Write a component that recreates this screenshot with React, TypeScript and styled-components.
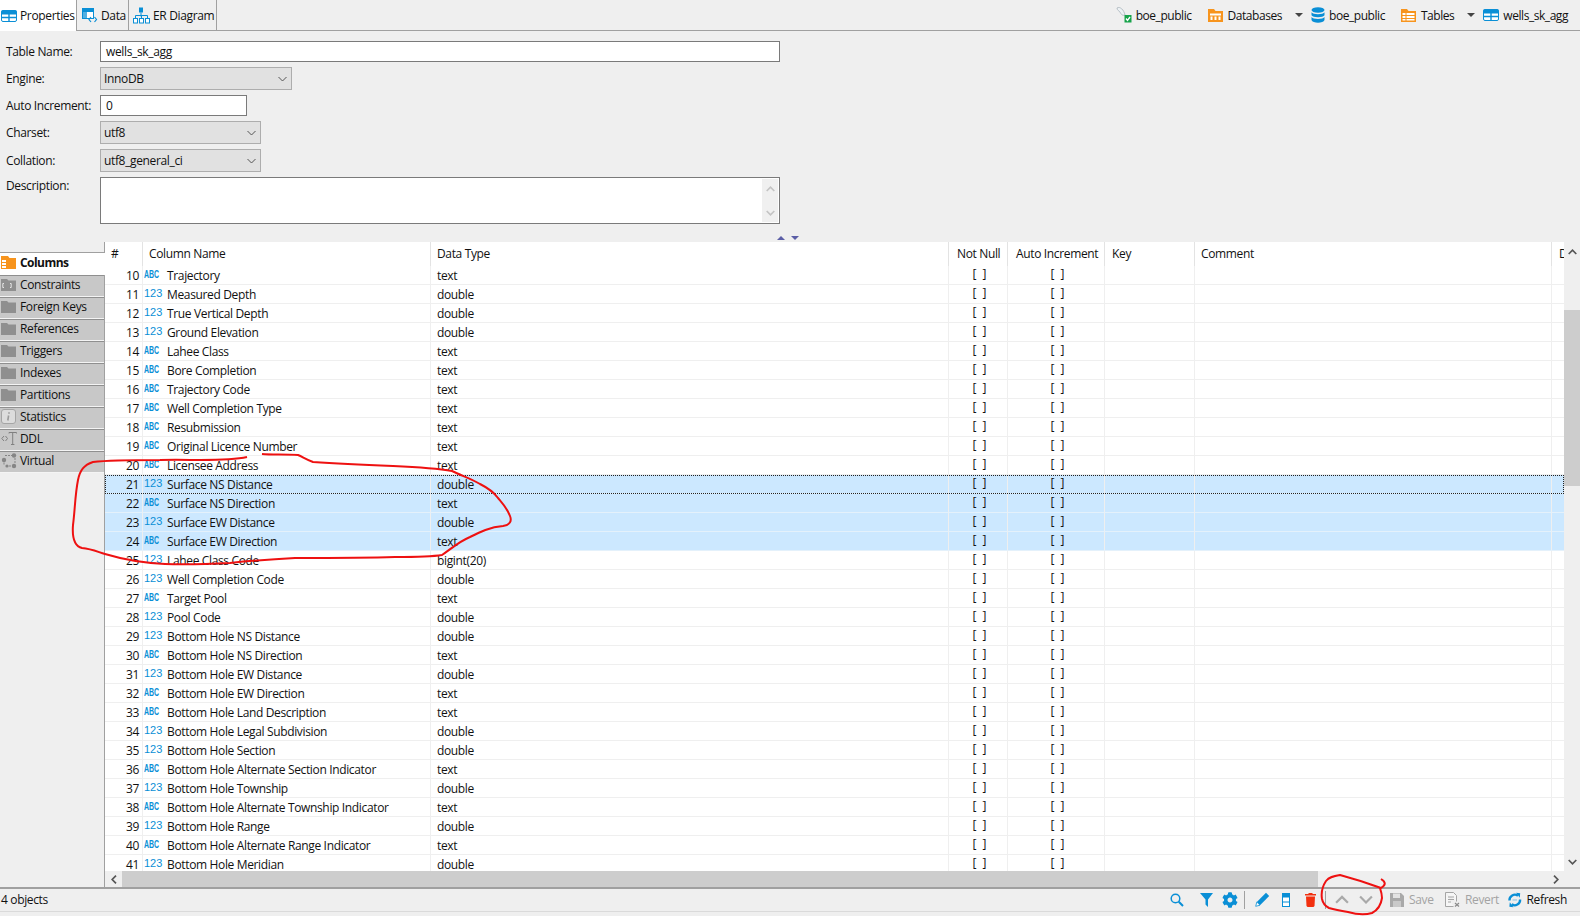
import React from 'react';
import styled, { createGlobalStyle } from 'styled-components';
import { FaCog } from 'react-icons/fa';

const Blue = '#0a8fd6';
const Orange = '#f7941d';
const Grey = '#8f8f8f';
const PanelBg = '#efefef';
const Line = '#a0a0a0';
const RowLine = '#efefef';

const GlobalStyle = createGlobalStyle`
  html, body {
    margin: 0;
    padding: 0;
    background: #fff;
    overflow: hidden;
  }
  * { box-sizing: border-box; }
`;

type Col = [number, 'abc' | '123', string, string];

const rows: Col[] = [
  [10, 'abc', 'Trajectory', 'text'],
  [11, '123', 'Measured Depth', 'double'],
  [12, '123', 'True Vertical Depth', 'double'],
  [13, '123', 'Ground Elevation', 'double'],
  [14, 'abc', 'Lahee Class', 'text'],
  [15, 'abc', 'Bore Completion', 'text'],
  [16, 'abc', 'Trajectory Code', 'text'],
  [17, 'abc', 'Well Completion Type', 'text'],
  [18, 'abc', 'Resubmission', 'text'],
  [19, 'abc', 'Original Licence Number', 'text'],
  [20, 'abc', 'Licensee Address', 'text'],
  [21, '123', 'Surface NS Distance', 'double'],
  [22, 'abc', 'Surface NS Direction', 'text'],
  [23, '123', 'Surface EW Distance', 'double'],
  [24, 'abc', 'Surface EW Direction', 'text'],
  [25, '123', 'Lahee Class Code', 'bigint(20)'],
  [26, '123', 'Well Completion Code', 'double'],
  [27, 'abc', 'Target Pool', 'text'],
  [28, '123', 'Pool Code', 'double'],
  [29, '123', 'Bottom Hole NS Distance', 'double'],
  [30, 'abc', 'Bottom Hole NS Direction', 'text'],
  [31, '123', 'Bottom Hole EW Distance', 'double'],
  [32, 'abc', 'Bottom Hole EW Direction', 'text'],
  [33, 'abc', 'Bottom Hole Land Description', 'text'],
  [34, '123', 'Bottom Hole Legal Subdivision', 'double'],
  [35, '123', 'Bottom Hole Section', 'double'],
  [36, 'abc', 'Bottom Hole Alternate Section Indicator', 'text'],
  [37, '123', 'Bottom Hole Township', 'double'],
  [38, 'abc', 'Bottom Hole Alternate Township Indicator', 'text'],
  [39, '123', 'Bottom Hole Range', 'double'],
  [40, 'abc', 'Bottom Hole Alternate Range Indicator', 'text'],
  [41, '123', 'Bottom Hole Meridian', 'double'],
];

// icons
const TableIcon = () => (
  <svg width="16" height="14" viewBox="0 0 16 14">
    <rect x="0.5" y="1.5" width="15" height="11" rx="1.5" fill="#fff" stroke={Blue} />
    <rect x="0.5" y="1.5" width="15" height="4" fill={Blue} />
    <path d="M8 2v10M1 8.5h14" stroke={Blue} strokeWidth="1.4" />
  </svg>
);

const DataIcon = () => (
  <svg width="16" height="16" viewBox="0 0 16 16">
    <rect x="0.5" y="1.5" width="11" height="10" fill="#fff" stroke={Blue} />
    <rect x="1" y="2" width="10" height="3" fill={Blue} />
    <rect x="1" y="5" width="4" height="6" fill={Blue} opacity="0.7" />
    <path d="M9 10l-2 2.5 2 2.5M12.5 10l2 2.5-2 2.5" fill="none" stroke={Blue} strokeWidth="1.2" />
  </svg>
);

const ErIcon = () => (
  <svg width="17" height="17" viewBox="0 0 17 17">
    <rect x="6" y="0.5" width="4" height="5" fill={Blue} />
    <path d="M8 5.5v4M2.5 11V8.5h12V11M8.5 9v2" fill="none" stroke={Blue} />
    <rect x="0.5" y="11.5" width="4" height="4.5" fill="#fff" stroke={Blue} />
    <rect x="6.5" y="11.5" width="4" height="4.5" fill="#fff" stroke={Blue} />
    <rect x="12.5" y="11.5" width="4" height="4.5" fill="#fff" stroke={Blue} />
  </svg>
);

const ConnIcon = () => (
  <svg width="16" height="18" viewBox="0 0 16 18">
    <path d="M1 2c3-2 7 2 8 7-3 1-4-1-5-3-1-1-3-2-3-4z" fill="#eef2f4" stroke="#a8b4bb" strokeWidth="0.8" />
    <rect x="8.5" y="9" width="7" height="7.5" fill="#17a34a" />
    <path d="M10 12.5l1.5 2 2.5-3.5" fill="none" stroke="#fff" strokeWidth="1.3" />
  </svg>
);

const OrangeFolder = ({ kind }: { kind: 'db' | 'rows' }) => (
  <svg width="15" height="14" viewBox="0 0 15 14">
    <path d="M0 1h6l1.5 2H15v11H0z" fill={Orange} />
    {kind === 'db' ? (
      <path d="M2 5.5h11v2H2zM2.5 8.5h2v3.5h-2zM6.5 8.5h2v3.5h-2zM10.5 8.5h2v3.5h-2z" fill="#fff" />
    ) : (
      <path d="M1.5 5h3v2h-3zM5.5 5h8v2h-8zM1.5 8h3v2h-3zM5.5 8h8v2h-8zM1.5 11h3v1.5h-3zM5.5 11h8v1.5h-8z" fill="#fff" />
    )}
  </svg>
);

const ColumnsIcon = () => (
  <svg width="15" height="13" viewBox="0 0 15 13">
    <path d="M0 0h7l1.5 2H15v11H0z" fill={Orange} />
    <path d="M1 4h4v2H1zM1 7h4v2H1zM1 10h4v2H1z" fill="#fff" />
  </svg>
);

const DbIcon = () => (
  <svg width="14" height="16" viewBox="0 0 14 16">
    <ellipse cx="7" cy="3" rx="6.5" ry="2.8" fill={Blue} />
    <path d="M0.5 5.2c1 2.6 12 2.6 13 0v3c-1 2.6-12 2.6-13 0zM0.5 10c1 2.6 12 2.6 13 0v3c-1 3.6-12 3.6-13 0z" fill={Blue} />
  </svg>
);

const GreyFolder = ({ children }: { children?: React.ReactNode }) => (
  <svg width="15" height="12" viewBox="0 0 15 12">
    <path d="M0 0h6l1.5 1.5H15V12H0z" fill={Grey} />
    {children}
  </svg>
);

const InfoIcon = () => (
  <svg width="15" height="15" viewBox="0 0 15 15">
    <rect x="0.5" y="0.5" width="14" height="14" rx="2.5" fill="#dcdcdc" stroke="#a5a5a5" />
    <path d="M8 3.2v1.6M7.6 6.5L6.8 11.5" stroke="#9a9a9a" strokeWidth="1.6" />
  </svg>
);

const DdlIcon = () => (
  <svg width="16" height="13" viewBox="0 0 16 13">
    <path d="M3 4L0.8 6.5 3 9M4.5 4l2 2.5-2 2.5" fill="none" stroke="#808080" />
    <path d="M8 1.5V0.5h7.5v1M11.7 0.5V12M10 12.5h3.4" fill="none" stroke="#808080" />
  </svg>
);

const VirtualIcon = () => (
  <svg width="16" height="16" viewBox="0 0 16 16">
    <circle cx="3" cy="7" r="2.2" fill="#858585" />
    <circle cx="13" cy="2.5" r="2.2" fill="#858585" />
    <circle cx="13" cy="13" r="2.2" fill="#858585" />
    <circle cx="6" cy="13" r="1.6" fill="#858585" />
    <path d="M4 2.5h7M3 9.5V12M8 13h3M14 5v5" stroke="#858585" strokeDasharray="2 1" fill="none" />
  </svg>
);

const Chevron = ({ up, color = '#555', size = 9, weight = 1.7 }: { up?: boolean; color?: string; size?: number; weight?: number }) => (
  <svg width={size} height={size * 0.67} viewBox="0 0 9 6">
    <path d={up ? 'M0.7 5L4.5 1.2 8.3 5' : 'M0.7 1L4.5 4.8 8.3 1'} fill="none" stroke={color} strokeWidth={weight} />
  </svg>
);

const SideChevron = ({ left }: { left?: boolean }) => (
  <svg width="6" height="9" viewBox="0 0 6 9">
    <path d={left ? 'M5 0.7L1.2 4.5 5 8.3' : 'M1 0.7L4.8 4.5 1 8.3'} fill="none" stroke="#555" strokeWidth="1.7" />
  </svg>
);

const SelectArrow = () => (
  <svg width="9" height="6" viewBox="0 0 9 6">
    <path d="M0.5 1L4.5 5 8.5 1" fill="none" stroke="#555" strokeWidth="1" />
  </svg>
);

const SearchIcon = () => (
  <svg width="14" height="14" viewBox="0 0 14 14">
    <circle cx="5.5" cy="5.5" r="4.3" fill="none" stroke={Blue} strokeWidth="1.5" />
    <path d="M8.8 8.8L13 13" stroke={Blue} strokeWidth="2" />
  </svg>
);

const FilterIcon = () => (
  <svg width="13" height="15" viewBox="0 0 13 15">
    <path d="M0 1h13L8 7.5V15L5.5 12.5V7.5z" fill={Blue} />
  </svg>
);

const PencilIcon = () => (
  <svg width="15" height="15" viewBox="0 0 15 15">
    <path d="M11 0.8l3.2 3.2L5 13.2 1.8 10z" fill={Blue} />
    <path d="M1.8 10L0.7 14.3 5 13.2z" fill="#fff" stroke={Blue} strokeWidth="0.8" />
  </svg>
);

const ColumnBoxIcon = () => (
  <svg width="8" height="14" viewBox="0 0 8 14">
    <rect x="0.5" y="0.5" width="7" height="13" fill="#fff" stroke={Blue} />
    <rect x="1" y="1" width="6" height="3.5" fill={Blue} />
    <path d="M0.5 9h7" stroke={Blue} />
  </svg>
);

const TrashIcon = () => (
  <svg width="11" height="14" viewBox="0 0 11 14">
    <path d="M3.5 1V0h4v1H11v1.5H0V1zM1 3.5h9l-.5 9.5-1 1h-6l-1-1z" fill="#f2300f" />
  </svg>
);

const SaveIcon = () => (
  <svg width="14" height="14" viewBox="0 0 14 14">
    <path d="M0 0h11l3 3v11H0z" fill="#a9a9a9" />
    <rect x="3" y="0.5" width="7" height="4.5" fill="#e3e3e3" />
    <rect x="3" y="8" width="8" height="6" fill="#c9c9c9" />
  </svg>
);

const RevertIcon = () => (
  <svg width="15" height="15" viewBox="0 0 15 15">
    <path d="M0.5 0.5h8l3 3v6M0.5 0.5v14h8" fill="#f6f6f6" stroke="#a5a5a5" />
    <path d="M3 5h6M3 7.5h6M3 10h3" stroke="#a5a5a5" />
    <path d="M10 11l4 3.5M14 11l-4 3.5" stroke="#8a8a8a" strokeWidth="1.2" />
  </svg>
);

const RefreshIcon = () => (
  <svg width="15" height="16" viewBox="0 0 15 16">
    <path d="M1.6 8.5A6 6 0 0 1 11 3.2" fill="none" stroke={Blue} strokeWidth="2.6" />
    <path d="M9 0l4.5 0.5-.5 5z" fill={Blue} />
    <path d="M13.4 7.5A6 6 0 0 1 4 12.8" fill="none" stroke={Blue} strokeWidth="2.6" />
    <path d="M6 16l-4.5-.5.5-5z" fill={Blue} />
    <path d="M5 8h5" stroke={Blue} opacity="0.5" />
  </svg>
);

const sideTabs: [string, React.ReactNode][] = [
  ['Constraints', (
    <GreyFolder>
      <path d="M3 4.5H1.8v4H3M9 4.5h1.2v4H9" fill="none" stroke="#e4e4e4" />
    </GreyFolder>
  )],
  ['Foreign Keys', <GreyFolder />],
  ['References', <GreyFolder />],
  ['Triggers', <GreyFolder />],
  ['Indexes', <GreyFolder />],
  ['Partitions', <GreyFolder />],
  ['Statistics', <InfoIcon />],
  ['DDL', <DdlIcon />],
  ['Virtual', <VirtualIcon />],
];

function App() {
  return (
    <Page>
      <GlobalStyle />
      <TopBar>
        <Tabs>
          <Tab $active $w={77} $pad={1}><TableIcon />Properties</Tab>
          <Tab $w={52} $pad={5}><DataIcon />Data</Tab>
          <Tab $w={88} $pad={4}><ErIcon />ER Diagram</Tab>
        </Tabs>
        <Crumbs>
          <Crumb><ConnIcon />boe_public</Crumb>
          <Crumb $gap={5}><OrangeFolder kind="db" />Databases</Crumb>
          <CrumbArrow />
          <Crumb><DbIcon />boe_public</Crumb>
          <Crumb $gap={5}><OrangeFolder kind="rows" />Tables</Crumb>
          <CrumbArrow />
          <Crumb $gap={4}><TableIcon />wells_sk_agg</Crumb>
        </Crumbs>
      </TopBar>

      <Form>
        <FormRow $h={21}>
          <FieldLabel>Table Name:</FieldLabel>
          <TextBox $w={680}>wells_sk_agg</TextBox>
        </FormRow>
        <FormRow $h={23}>
          <FieldLabel>Engine:</FieldLabel>
          <SelectBox $w={192}>InnoDB<SelectArrow /></SelectBox>
        </FormRow>
        <FormRow $h={21}>
          <FieldLabel>Auto Increment:</FieldLabel>
          <TextBox $w={147}>0</TextBox>
        </FormRow>
        <FormRow $h={23}>
          <FieldLabel>Charset:</FieldLabel>
          <SelectBox $w={161}>utf8<SelectArrow /></SelectBox>
        </FormRow>
        <FormRow $h={23}>
          <FieldLabel>Collation:</FieldLabel>
          <SelectBox $w={161}>utf8_general_ci<SelectArrow /></SelectBox>
        </FormRow>
        <FormRow $h={47}>
          <FieldLabel>Description:</FieldLabel>
          <AreaBox>
            <MiniScroll>
              <Chevron up color="#c4c4c4" />
              <Chevron color="#c4c4c4" />
            </MiniScroll>
          </AreaBox>
        </FormRow>
      </Form>

      <Sash>
        <SashUp />
        <SashDown />
      </Sash>

      <Main>
        <Sidebar>
          <ActiveSideTab><ColumnsIcon />Columns</ActiveSideTab>
          {sideTabs.map(([label, icon]) => (
            <SideTab key={label}>
              <SideIcon>{icon}</SideIcon>
              {label}
            </SideTab>
          ))}
        </Sidebar>

        <TableArea>
          <TableBody>
            <Grid>
              <HeaderRow>
                <HeadCell>#</HeadCell>
                <HeadCell>Column Name</HeadCell>
                <HeadCell $pad={6}>Data Type</HeadCell>
                <HeadCell $pad={8}>Not Null</HeadCell>
                <HeadCell $pad={8}>Auto Increment</HeadCell>
                <HeadCell $pad={7}>Key</HeadCell>
                <HeadCell $pad={6}>Comment</HeadCell>
                <HeadCell $pad={7}>D</HeadCell>
              </HeaderRow>
              <RowList>
                {rows.map(([n, type, name, dataType]) => (
                  <Row key={n} $selected={n >= 21 && n <= 24} $focused={n === 21}>
                    <NumCell>{n}</NumCell>
                    <NameCell>
                      {type === 'abc' ? <AbcTag>ABC</AbcTag> : <NumTag>123</NumTag>}
                      <span>{name}</span>
                    </NameCell>
                    <Cell $pad={6}>{dataType}</Cell>
                    <BoolCell>{'[  ]'}</BoolCell>
                    <BoolCell>{'[  ]'}</BoolCell>
                    <Cell />
                    <Cell />
                    <Cell />
                  </Row>
                ))}
              </RowList>
            </Grid>
            <VScroll>
              <ScrollEnd><Chevron up /></ScrollEnd>
              <VThumb />
              <ScrollEnd><Chevron /></ScrollEnd>
            </VScroll>
          </TableBody>
          <HScroll>
            <HEnd><SideChevron left /></HEnd>
            <HThumb />
            <HEnd $end><SideChevron /></HEnd>
          </HScroll>
        </TableArea>
      </Main>

      <StatusBar>
        <span>4 objects</span>
        <Tools>
          <ToolSlot $mr={5}><SearchIcon /></ToolSlot>
          <ToolSlot><FilterIcon /></ToolSlot>
          <ToolSlot><FaCog size={16} color={Blue} /></ToolSlot>
          <ToolSep $l={2} $r={5} />
          <ToolSlot><PencilIcon /></ToolSlot>
          <ToolSlot><ColumnBoxIcon /></ToolSlot>
          <ToolSlot><TrashIcon /></ToolSlot>
          <ToolSep $l={3} $r={4} />
          <ToolSlot><Chevron up color="#a9a9a9" size={14} weight={1.4} /></ToolSlot>
          <ToolSlot $mr={12}><Chevron color="#a9a9a9" size={14} weight={1.4} /></ToolSlot>
          <ToolText $w={55} $off><SaveIcon />Save</ToolText>
          <ToolText $w={63} $off><RevertIcon />Revert</ToolText>
          <ToolText $w={59}><RefreshIcon />Refresh</ToolText>
        </Tools>
      </StatusBar>
      <BottomStrip />

      <Scribbles viewBox="0 0 1584 916">
        <path d="M247 457 C225 462 190 459 160 460 C135 460 110 460 93 462 C84 465 80 470 78 480 C75 495 75 510 73 525 C72 538 74 546 82 548 C92 549 98 552 105 554 C125 560 145 563 165 564 C190 565 210 564 230 563 C250 561 275 559 295 558 C330 558 365 558 395 557 C415 557 430 557 442 555 C452 548 460 541 470 537 C480 532 490 527 503 526 C510 525 512 521 510 516 C507 508 503 504 498 498 C493 491 488 488 480 484 C470 478 462 476 452 471 C435 468 415 467 393 466 C365 465 340 464 313 462 C305 459 303 457 298 455 C285 454 272 455 262 454" fill="none" stroke="#ee1111" strokeWidth="2" />
        <path d="M1381 879 C1386 882 1386 885 1381 888 C1370 884 1355 879 1340 875 C1333 876 1329 877 1326 881 C1322 887 1321 893 1322 899 C1323 904 1325 906 1329 908 C1336 910 1342 911 1348 912 C1355 914 1365 915 1372 913 C1378 910 1381 905 1382 898 C1382 894 1381 891 1380 888" fill="none" stroke="#ee1111" strokeWidth="2" />
      </Scribbles>
    </Page>
  );
}

export default App;

const Font = `"Open Sans", "Noto Sans", sans-serif`;

const Page = styled.div`
  position: relative;
  width: 1580px;
  height: 916px;
  background: ${PanelBg};
  color: #111;
  font-family: ${Font};
  font-size: 12px;
  letter-spacing: -0.35px;
  display: flex;
  flex-direction: column;
  overflow: hidden;
`;

const TopBar = styled.div`
  height: 31px;
  flex: none;
  display: flex;
  justify-content: space-between;
  border-bottom: 1px solid ${Line};
`;

const Tabs = styled.div`
  display: flex;
`;

const Tab = styled.div<{ $active?: boolean; $w: number; $pad: number }>`
  width: ${(p) => p.$w}px;
  height: ${(p) => (p.$active ? 31 : 30)}px;
  display: flex;
  align-items: center;
  gap: 3px;
  padding-left: ${(p) => p.$pad}px;
  white-space: nowrap;
  background: ${(p) => (p.$active ? '#fff' : PanelBg)};
  border-right: 1px solid ${Line};
`;

const Crumbs = styled.div`
  display: flex;
  align-items: center;
  padding-right: 12px;
  height: 30px;
  letter-spacing: -0.45px;
`;

const Crumb = styled.div<{ $gap?: number }>`
  display: flex;
  align-items: center;
  gap: ${(p) => p.$gap ?? 4}px;
  margin-left: 16px;
  white-space: nowrap;
`;

const CrumbArrow = styled.div`
  width: 0;
  height: 0;
  margin: 0 -8px 0 13px;
  border-left: 4px solid transparent;
  border-right: 4px solid transparent;
  border-top: 4px solid #444;
`;

const Form = styled.div`
  flex: none;
  display: flex;
  flex-direction: column;
  gap: 5px;
  padding: 10px 0 0 6px;
`;

const FormRow = styled.div<{ $h: number }>`
  display: flex;
  height: ${(p) => p.$h}px;
  align-items: ${(p) => (p.$h > 30 ? 'flex-start' : 'center')};
`;

const FieldLabel = styled.div`
  width: 94px;
  flex: none;
`;

const TextBox = styled.div<{ $w: number }>`
  width: ${(p) => p.$w}px;
  height: 100%;
  background: #fff;
  border: 1px solid #7a7a7a;
  padding-left: 5px;
  line-height: 19px;
`;

const SelectBox = styled.div<{ $w: number }>`
  width: ${(p) => p.$w}px;
  height: 100%;
  background: #e1e1e1;
  border: 1px solid #adadad;
  padding: 0 4px 0 3px;
  display: flex;
  align-items: center;
  justify-content: space-between;
`;

const AreaBox = styled.div`
  width: 680px;
  height: 47px;
  background: #fff;
  border: 1px solid #7a7a7a;
  display: flex;
  justify-content: flex-end;
  padding: 1px;
`;

const MiniScroll = styled.div`
  width: 16px;
  background: #f0f0f0;
  display: flex;
  flex-direction: column;
  align-items: center;
  justify-content: space-between;
  padding: 7px 0 6px;
`;

const Sash = styled.div`
  flex: none;
  height: 18px;
  display: flex;
  align-items: flex-end;
  gap: 6px;
  padding: 0 0 2px 777px;
`;

const SashUp = styled.div`
  width: 0;
  height: 0;
  border-left: 4px solid transparent;
  border-right: 4px solid transparent;
  border-bottom: 4px solid #5b5ea6;
`;

const SashDown = styled.div`
  width: 0;
  height: 0;
  border-left: 4px solid transparent;
  border-right: 4px solid transparent;
  border-top: 4px solid #5b5ea6;
`;

const Main = styled.div`
  flex: none;
  height: 645px;
  display: flex;
`;

const Sidebar = styled.div`
  width: 105px;
  flex: none;
  padding-top: 10px;
  border-right: 1px solid ${Line};
`;

const ActiveSideTab = styled.div`
  height: 23px;
  margin-right: -1px;
  padding: 0 0 3px 1px;
  background: #fff;
  border-top: 1px solid ${Line};
  display: flex;
  align-items: center;
  gap: 4px;
  font-weight: 700;
  letter-spacing: -0.55px;
  position: relative;
`;

const SideTab = styled.div`
  height: 22px;
  padding: 0 0 3px 1px;
  background: #c8c8c8;
  border-top: 1px solid #8f8f8f;
  border-bottom: 1px solid #f4f4f4;
  display: flex;
  align-items: center;
`;

const SideIcon = styled.span`
  width: 19px;
  flex: none;
  display: flex;
  align-items: center;
`;

const TableArea = styled.div`
  flex: 1;
  min-width: 0;
  display: flex;
  flex-direction: column;
`;

const TableBody = styled.div`
  flex: none;
  height: 629px;
  display: flex;
`;

const Grid = styled.div`
  width: 1459px;
  flex: none;
  background: #fff;
  overflow: hidden;
`;

const Columns = '38px 288px 518px 59px 97px 90px 357px 12px';

const HeaderRow = styled.div`
  display: grid;
  grid-template-columns: ${Columns};
  height: 24px;
`;

const HeadCell = styled.div<{ $pad?: number }>`
  display: flex;
  align-items: center;
  padding: 0 0 2px ${(p) => p.$pad ?? 6}px;
  border-right: 1px solid #e3e3e3;
  white-space: nowrap;
  overflow: hidden;
  &:last-child { border-right: 0; }
`;

const RowList = styled.div`
  display: flex;
  flex-direction: column;
`;

const Row = styled.div<{ $selected?: boolean; $focused?: boolean }>`
  position: relative;
  display: grid;
  grid-template-columns: ${Columns};
  height: 19px;
  flex: none;
  background: ${(p) => (p.$selected ? '#cce8ff' : '#fff')};
  border-bottom: 1px solid ${(p) => (p.$selected ? '#e4f1fb' : RowLine)};
  outline: ${(p) => (p.$focused ? '1px dotted #222' : 'none')};
  outline-offset: -1px;
`;

const Cell = styled.div<{ $pad?: number }>`
  display: flex;
  align-items: center;
  padding-left: ${(p) => p.$pad ?? 0}px;
  border-right: 1px solid ${RowLine};
  white-space: pre;
  overflow: hidden;
  &:last-child { border-right: 0; }
`;

const BoolCell = styled(Cell)`
  justify-content: center;
  padding: 0 0 3px 3px;
  letter-spacing: 0;
`;

const NumCell = styled(Cell)`
  justify-content: flex-end;
  padding-right: 3px;
`;

const NameCell = styled(Cell)`
  padding-left: 1px;
  span:last-child { margin-left: 8px; }
`;

const TagBase = styled.span`
  width: 15px;
  flex: none;
  color: ${Blue};
  font-family: "Liberation Sans", sans-serif;
  letter-spacing: 0;
  position: relative;
  top: -1px;
`;

const AbcTag = styled(TagBase)`
  font-size: 10px;
  font-weight: 700;
  transform: scaleX(0.7);
  transform-origin: left center;
  white-space: nowrap;
`;

const NumTag = styled(TagBase)`
  font-size: 11px;
`;

const VScroll = styled.div`
  width: 16px;
  flex: none;
  display: flex;
  flex-direction: column;
`;

const ScrollEnd = styled.div`
  height: 18px;
  flex: none;
  display: flex;
  align-items: center;
  justify-content: center;
  &:first-child {
    height: 68px;
    align-items: flex-start;
    padding-top: 7px;
  }
  &:last-child {
    margin-top: auto;
  }
`;

const VThumb = styled.div`
  height: 176px;
  background: #cdcdcd;
`;

const HScroll = styled.div`
  height: 16px;
  flex: none;
  display: flex;
`;

const HEnd = styled.div<{ $end?: boolean }>`
  width: 17px;
  flex: none;
  display: flex;
  align-items: center;
  justify-content: center;
  margin-left: ${(p) => (p.$end ? 'auto' : 0)};
  margin-right: ${(p) => (p.$end ? '16px' : 0)};
`;

const HThumb = styled.div`
  width: 1196px;
  background: #cdcdcd;
`;

const StatusBar = styled.div`
  flex: none;
  height: 25px;
  border-top: 2px solid ${Line};
  border-bottom: 1px solid #dadada;
  display: flex;
  align-items: center;
  justify-content: space-between;
  padding: 0 13px 1px 1px;
`;

const Tools = styled.div`
  display: flex;
  align-items: center;
  height: 100%;
`;

const ToolSlot = styled.div<{ $mr?: number }>`
  width: 24px;
  margin-right: ${(p) => p.$mr ?? 0}px;
  display: flex;
  align-items: center;
  justify-content: center;
`;

const ToolSep = styled.div<{ $l: number; $r: number }>`
  width: 1px;
  height: 18px;
  background: ${Line};
  margin: 0 ${(p) => p.$r}px 0 ${(p) => p.$l}px;
`;

const ToolText = styled.div<{ $w: number; $off?: boolean }>`
  width: ${(p) => p.$w}px;
  display: flex;
  align-items: center;
  gap: 5px;
  white-space: nowrap;
  color: ${(p) => (p.$off ? '#a3a3a3' : '#111')};
`;

const BottomStrip = styled.div`
  flex: 1;
  background: ${PanelBg};
`;

const Scribbles = styled.svg`
  position: absolute;
  left: 0;
  top: 0;
  width: 1584px;
  height: 916px;
  pointer-events: none;
`;
